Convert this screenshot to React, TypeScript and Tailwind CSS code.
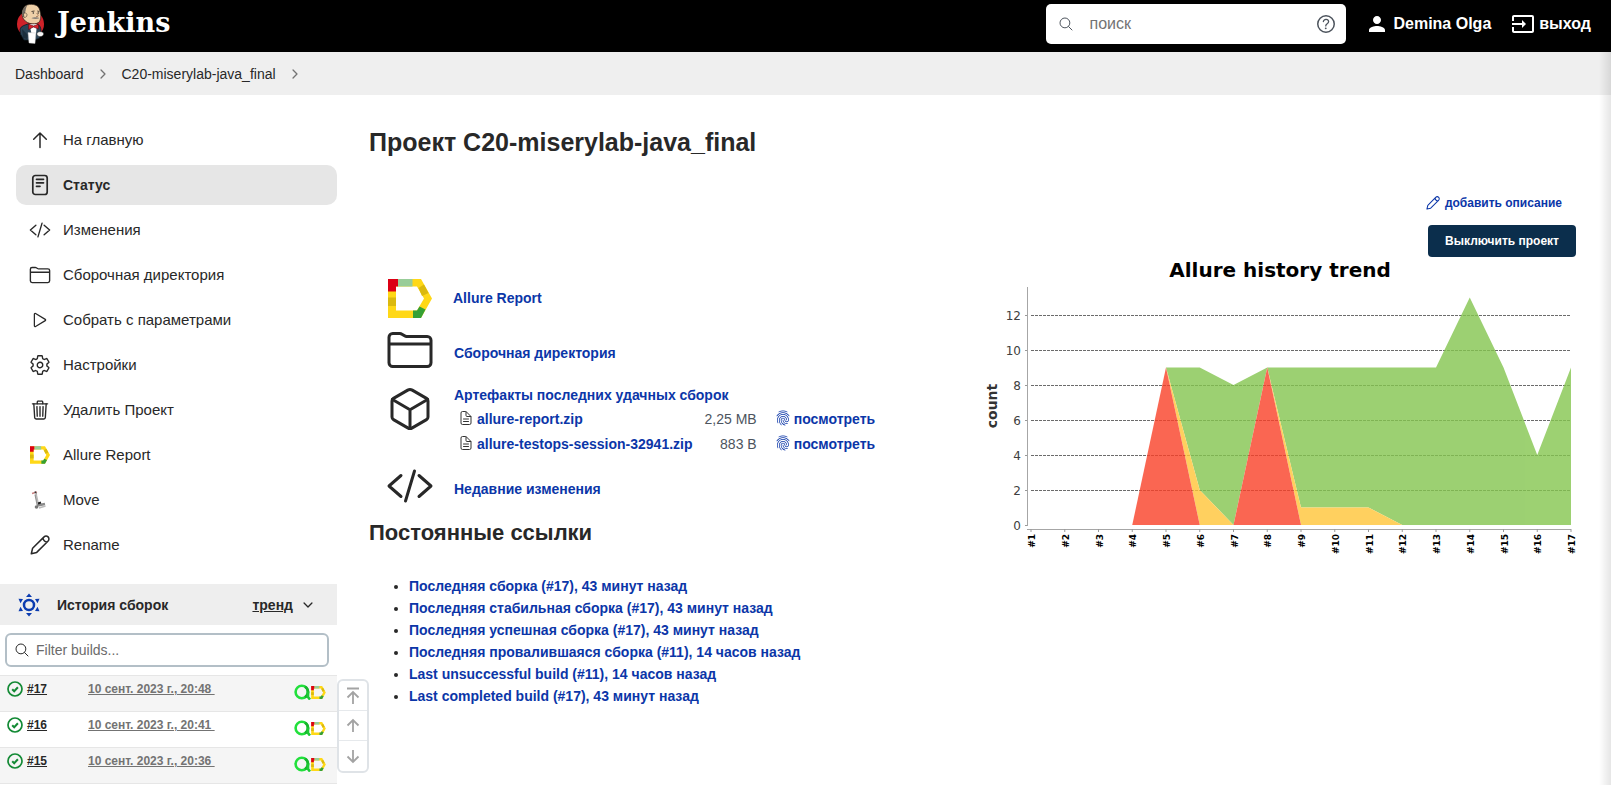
import type { ReactNode } from "react";
import {
  IoChevronForwardOutline,
  IoChevronDownOutline,
  IoCodeSlashOutline,
  IoCubeOutline,
  IoDocumentTextOutline,
  IoFingerPrintOutline,
  IoFolderOutline,
  IoHelpCircleOutline,
  IoPlayOutline,
  IoSearchOutline,
  IoSettingsOutline,
  IoTrashOutline,
} from "react-icons/io5";
import { MdInput, MdPerson } from "react-icons/md";

const link = "font-bold text-[#0b36a8]";

function Mascot() {
  return (
    <svg viewBox="0 0 30 40" className="h-10 w-[30px]" aria-hidden="true">
      <circle cx="15.500" cy="20" r="13.500" fill="#cf2229" />
      <path d="M5 25 C6 22 10 21 13 20 L22 20 C25 21 26 24 26 27 L24.500 34 L20 36 L9 36 L5.500 30 Z" fill="#2b4456" stroke="#0d1a22" strokeWidth="0.800" />
      <path d="M14.500 20 L22 20 L21 30 L16.500 30 Z" fill="#fff" />
      <path d="M7 25 L13 31 L12 35 L8 34 Z" fill="#1c2f3d" />
      <path d="M8.500 15 C6 11 7 4 11 1.500 C15 -0.500 22 0 24 4 C26 9 26.500 14 24.500 17.500 C22 21 12.500 21 8.500 15 Z" fill="#efd0a8" stroke="#2a1f18" strokeWidth="0.700" />
      <path d="M7.500 12 C6 7 8.500 3 12 1.800 C10.500 4.500 11 6.500 10 8.500 L9.500 14 Z" fill="#6f6860" />
      <path d="M8.500 10 C9.500 8 12 9 12 11 C12 13 10 14 8.800 13 Z" fill="#efd0a8" stroke="#2a1f18" strokeWidth="0.500" />
      <path d="M16.500 7.500 L19.500 7 M22.300 7 L24.300 7.500" stroke="#2a1f18" strokeWidth="0.800" />
      <circle cx="18.300" cy="9" r="0.700" fill="#222" />
      <circle cx="23.200" cy="9" r="0.700" fill="#222" />
      <path d="M21.500 9 C23.500 11 24 13 21 12.600" fill="none" stroke="#8b5a3c" strokeWidth="0.700" />
      <path d="M16.500 14.300 C18 13 23 13 24.500 14.300 C22 15.300 19 15.300 16.500 14.300 Z" fill="#8b8279" />
      <path d="M13.500 20 L18.500 22 L23.500 20 L23.500 25 L18.500 23 L13.500 25.500 Z" fill="#d7232d" stroke="#5a0d12" strokeWidth="0.600" />
      <path d="M13 28.500 L21 29 L20 39.500 L14 39 Z" fill="#fff" stroke="#bbb" strokeWidth="0.400" />
      <path d="M22 29 C24 27 27 27.500 28.500 29 C29 31.500 27 33 24 32.500 L22 31 Z" fill="#f4f4f4" stroke="#333" strokeWidth="0.500" />
    </svg>
  );
}

function AllureLogo({ className }: { className: string }) {
  return (
    <svg viewBox="0 0 44 39" className={className} aria-hidden="true">
      <path d="M0 0 H33 L44 19.500 L33 39 H0 Z M8 7.500 V31.500 H29 L36 19.500 L29 7.500 Z" fill="#ffd817" fillRule="evenodd" />
      <path d="M0 0 H10 V7.500 H8 V12.500 H0 Z" fill="#dc0014" />
      <path d="M10 0 H24.500 V7.500 H10 Z" fill="#98cd98" />
      <path d="M0 18.500 H8 V27 H0 Z" fill="#dbb90f" />
      <path d="M30.500 9 L36 5.500 L40.500 14 L34 17 Z" fill="#dbb90f" />
      <path d="M25 31.500 H29 L31.500 27.500 L37.500 30.500 L33 39 H25 Z" fill="#35a035" />
    </svg>
  );
}

function TestOpsLogo() {
  return (
    <svg viewBox="0 0 17 16" className="h-4 w-[17px] shrink-0" aria-hidden="true">
      <circle cx="7.800" cy="8" r="6.200" fill="none" stroke="#22e03c" strokeWidth="2.600" />
      <path d="M11 2.700 A6.200 6.200 0 0 1 11 13.300" fill="none" stroke="#17b52d" strokeWidth="2.600" />
      <path d="M14 7.500 V13 L16 15.500" fill="none" stroke="#1cc935" strokeWidth="2.600" />
    </svg>
  );
}

function ArrowUp({ className }: { className?: string }) {
  return (
    <svg viewBox="0 0 20 20" className={`size-5 ${className ?? ""}`} fill="none" stroke="currentColor" strokeWidth="1.500" strokeLinecap="round" strokeLinejoin="round" aria-hidden="true">
      <path d="M10 17.500 V3 M3.700 9.300 L10 3 L16.300 9.300" />
    </svg>
  );
}

function StatusIcon() {
  return (
    <svg viewBox="0 0 20 22" className="h-[22px] w-5" fill="none" stroke="currentColor" strokeWidth="1.700" strokeLinecap="round" aria-hidden="true">
      <rect x="2.800" y="1.500" width="14.400" height="19" rx="2.500" />
      <path d="M6.500 5.300 H13.500 M6.500 8.800 H13.500 M6.500 12.300 H10" />
    </svg>
  );
}

function Pencil({ className }: { className: string }) {
  return (
    <svg viewBox="0 0 20 20" className={className} fill="none" stroke="currentColor" strokeWidth="1.500" strokeLinejoin="round" aria-hidden="true">
      <path d="M1.300 18.700 L2.600 13.300 L13.800 2.100 C15.200 0.700 17 0.800 18.100 1.900 C19.200 3 19.300 4.800 17.900 6.200 L6.700 17.400 Z M13 3 C13.300 5.500 14.500 6.700 17 7" />
    </svg>
  );
}

function Scooter() {
  return (
    <svg viewBox="0 0 20 20" className="size-5" fill="none" aria-hidden="true">
      <path d="M2 3.500 L7 2" stroke="#c98080" strokeWidth="1.500" />
      <path d="M5 1.500 L6.500 4.500" stroke="#333" strokeWidth="1.500" />
      <path d="M5.500 3 L8 14" stroke="#b8b8b8" strokeWidth="2.200" />
      <path d="M5 5 L7 15" stroke="#666" strokeWidth="0.600" />
      <path d="M7 15.500 L15 14" stroke="#8a8a8a" strokeWidth="2.600" />
      <path d="M8 13.500 L11 12.500" stroke="#222" strokeWidth="2" />
      <circle cx="6.500" cy="17" r="1.800" fill="#777" />
      <path d="M9 18 L15.500 16" stroke="#bbb" strokeWidth="1.500" />
    </svg>
  );
}

function HistoryIcon() {
  return (
    <svg viewBox="0 0 22 24" className="h-6 w-[22px]" fill="#0b3cb0" aria-hidden="true">
      <circle cx="11" cy="12" r="5" fill="none" stroke="#0b3cb0" strokeWidth="2.500" />
      <path d="M11 0.500 L14 4 H8 Z M11 23.500 L14 20 H8 Z M0.500 5.800 L5 6 L2.500 10.300 Z M21.500 5.800 L17 6 L19.500 10.300 Z M0.500 18.200 L5 18 L2.500 13.700 Z M21.500 18.200 L17 18 L19.500 13.700 Z" />
    </svg>
  );
}

function SuccessIcon() {
  return (
    <svg viewBox="0 0 16 16" className="size-4" fill="none" stroke="#138a35" aria-hidden="true">
      <circle cx="8" cy="8" r="7" strokeWidth="1.700" />
      <path d="M5.200 8.200 L7.200 10.200 L10.900 6.200" strokeWidth="2" />
    </svg>
  );
}

const tasks: { label: string; icon: ReactNode; active?: boolean }[] = [
  { label: "На главную", icon: <ArrowUp /> },
  { label: "Статус", icon: <StatusIcon />, active: true },
  { label: "Изменения", icon: <IoCodeSlashOutline className="size-[22px]" /> },
  { label: "Сборочная директория", icon: <IoFolderOutline className="size-[22px]" /> },
  { label: "Собрать с параметрами", icon: <IoPlayOutline className="size-5" /> },
  { label: "Настройки", icon: <IoSettingsOutline className="size-[22px]" /> },
  { label: "Удалить Проект", icon: <IoTrashOutline className="size-[22px]" /> },
  { label: "Allure Report", icon: <AllureLogo className="h-[18px] w-5" /> },
  { label: "Move", icon: <Scooter /> },
  { label: "Rename", icon: <Pencil className="size-5" /> },
];

const builds = [
  { id: "#17", date: "10 сент. 2023 г., 20:48" },
  { id: "#16", date: "10 сент. 2023 г., 20:41" },
  { id: "#15", date: "10 сент. 2023 г., 20:36" },
];

const artifacts = [
  { name: "allure-report.zip", size: "2,25 MB" },
  { name: "allure-testops-session-32941.zip", size: "883 B" },
];

const permalinks = [
  "Последняя сборка (#17), 43 минут назад",
  "Последняя стабильная сборка (#17), 43 минут назад",
  "Последняя успешная сборка (#17), 43 минут назад",
  "Последняя провалившаяся сборка (#11), 14 часов назад",
  "Last unsuccessful build (#11), 14 часов назад",
  "Last completed build (#17), 43 минут назад",
];

function points(values: [number, number][]) {
  return values.map(([build, count]) => `${56 + 33.75 * (build - 1)},${268 - 17.5 * count}`).join(" ");
}

function TrendChart() {
  const buildNumbers = Array.from({ length: 17 }, (_, i) => i + 1);
  return (
    <svg viewBox="0 0 605 300" className="h-[300px] w-[605px]" fontFamily="'DejaVu Sans', sans-serif" role="img" aria-label="Allure history trend">
      <text x="305" y="20" textAnchor="middle" fontSize="20" fontWeight="bold">Allure history trend</text>
      <text x="22" y="149" textAnchor="middle" fontSize="14" fontWeight="bold" fill="#333" transform="rotate(-90 22 149)">count</text>
      {[12, 10, 8, 6, 4, 2, 0].map((v) => (
        <g key={v}>
          <text x="46" y={273 - 17.5 * v} textAnchor="end" fontSize="12" fill="#404040">{v}</text>
          <path d={`M50 ${268.5 - 17.5 * v} H52`} stroke="#999" />
          {v > 0 && <path d={`M56 ${268.5 - 17.5 * v} H595`} stroke="#6b6b6b" strokeDasharray="3 1" />}
        </g>
      ))}
      <g opacity="0.8">
        <polygon fill="#84c54f" points={points([[5, 9], [6, 9], [7, 8], [8, 9], [13, 9], [14, 13], [15, 9], [16, 4], [17, 9], [17, 0], [12, 0], [11, 1], [9, 1], [8, 9], [7, 0], [6, 2]])} />
        <polygon fill="#ffc538" points={points([[5, 9], [6, 2], [7, 0], [6, 0]])} />
        <polygon fill="#ffc538" points={points([[8, 9], [9, 1], [11, 1], [12, 0], [9, 0]])} />
        <polygon fill="#fa4027" points={points([[4, 0], [5, 9], [6, 0]])} />
        <polygon fill="#fa4027" points={points([[7, 0], [8, 9], [9, 0]])} />
      </g>
      <path d="M52.500 30 V269 M52 272.500 H596" stroke="#a6a6a6" fill="none" />
      {buildNumbers.map((n) => {
        const x = 56 + 33.75 * (n - 1);
        return (
          <g key={n}>
            <path d={`M${x} 272 V275`} stroke="#999" />
            <text x={x + 4} y="277" textAnchor="end" fontSize="9" fontWeight="bold" transform={`rotate(-90 ${x + 4} 277)`}>{`#${n}`}</text>
          </g>
        );
      })}
    </svg>
  );
}

export default function App() {
  return (
    <div className="relative min-h-screen overflow-hidden bg-white text-sm text-[#282828] [font-family:'Liberation_Sans',Arial,sans-serif]">
      <header className="flex h-[52px] items-center bg-black pr-5 pl-[15px] text-white">
        <a href="#" className="flex items-center gap-3 pb-1">
          <Mascot />
          <span className="pb-0.5 text-[27px] leading-8 font-bold [font-family:'DejaVu_Serif',serif]">Jenkins</span>
        </a>
        <form className="mr-[19px] mb-1 ml-auto flex h-10 w-[300px] items-center rounded-[5px] bg-white px-3 text-[#4d545d]">
          <IoSearchOutline className="size-4" />
          <input aria-label="поиск" placeholder="поиск" className="min-w-0 flex-1 px-[15px] text-base outline-none placeholder:text-[#737373]" />
          <button type="button" aria-label="Справка" className="-mr-1"><IoHelpCircleOutline className="size-6" /></button>
        </form>
        <a href="#" className="flex items-center gap-1 pb-1 text-base font-bold"><MdPerson className="size-6" />Demina Olga</a>
        <a href="#" className="ml-5 flex items-center gap-1 pb-1 text-base font-bold"><MdInput className="size-6" />выход</a>
      </header>

      <nav aria-label="Навигация" className="flex h-[43px] items-center bg-[#efefef] pl-[15px]">
        <a href="#">Dashboard</a>
        <IoChevronForwardOutline className="mx-3 size-3.5 text-[#737373]" />
        <a href="#">C20-miserylab-java_final</a>
        <IoChevronForwardOutline className="mx-3 size-3.5 text-[#737373]" />
      </nav>

      <div className="flex items-start">
        <aside className="w-[337px] shrink-0 pt-[25px]">
          <nav aria-label="Задачи" className="flex flex-col gap-[5px] pl-4">
            {tasks.map((t) => (
              <a key={t.label} href="#" className={`flex h-10 items-center gap-[11px] rounded-[10px] pl-3 ${t.active ? "bg-[#e6e6e6] font-bold" : "text-[15px]"}`}>
                <span className="flex w-6 justify-center">{t.icon}</span>
                {t.label}
              </a>
            ))}
          </nav>

          <section className="mt-[19px]">
            <div className="flex h-[41px] items-center bg-[#eee] pr-[22px] pl-[18px]">
              <HistoryIcon />
              <h2 className="ml-[17px] font-bold">История сборок</h2>
              <a href="#" className="mr-2 ml-auto font-bold underline">тренд</a>
              <IoChevronDownOutline className="size-3.5" />
            </div>
            <label className="mt-2 mr-2 ml-[5px] flex h-[34px] items-center gap-1.5 rounded-md border-2 border-[#b3bfc7] px-[7px]">
              <IoSearchOutline className="size-4" />
              <input aria-label="Filter builds" placeholder="Filter builds..." className="min-w-0 flex-1 outline-none placeholder:text-[#6b6b6b]" />
            </label>
            <div className="relative mt-2">
              <table className="w-full table-fixed border-b border-[#e6e6e6] text-xs font-bold">
                <tbody>
                  {builds.map((b) => (
                    <tr key={b.id} className="h-9 border-t border-[#e6e6e6] align-top odd:bg-[#f5f5f5]">
                      <td className="w-[88px] pt-[5px] pl-[7px]">
                        <a href="#" className="flex items-center gap-1"><SuccessIcon /><span className="underline">{b.id}</span></a>
                      </td>
                      <td className="pt-[5px]"><a href="#" className="whitespace-pre text-[#737373] underline">{`${b.date} `}</a></td>
                      <td className="w-[50px] pt-2 pr-[11px]">
                        <span className="flex items-center justify-end"><TestOpsLogo /><AllureLogo className="h-[13px] w-[15px]" /></span>
                      </td>
                    </tr>
                  ))}
                </tbody>
              </table>
              <div className="absolute top-1 left-full flex w-8 flex-col divide-y divide-[#e6e9ec] rounded-md border-2 border-[#dfe3e7] bg-white text-[#a3a3a3]">
                <button type="button" aria-label="Новейшие" className="flex h-[30px] items-center justify-center">
                  <svg viewBox="0 0 16 18" className="h-[18px] w-4" fill="none" stroke="currentColor" strokeWidth="1.800" aria-hidden="true"><path d="M2 1.500 H14 M8 17 V5 M2.500 10.500 L8 5 L13.500 10.500" /></svg>
                </button>
                <button type="button" aria-label="Новее" className="flex h-[30px] items-center justify-center">
                  <svg viewBox="0 0 16 18" className="h-[18px] w-4" fill="none" stroke="currentColor" strokeWidth="1.800" aria-hidden="true"><path d="M8 15 V3 M2.500 8.500 L8 3 L13.500 8.500" /></svg>
                </button>
                <button type="button" aria-label="Старее" className="flex h-[30px] items-center justify-center">
                  <svg viewBox="0 0 16 18" className="h-[18px] w-4" fill="none" stroke="currentColor" strokeWidth="1.800" aria-hidden="true"><path d="M8 3 V15 M2.500 9.500 L8 15 L13.500 9.500" /></svg>
                </button>
              </div>
            </div>
          </section>
        </aside>

        <main className="min-w-0 flex-1 pt-8 pr-[31px] pl-8">
          <h1 className="text-[25px] leading-[30px] font-bold">Проект C20-miserylab-java_final</h1>
          <div className="mt-8 flex items-start justify-between">
            <div className="shrink-0">
              <div className="flex flex-col pt-[86px] pl-[17px]">
                <div className="flex h-[46px] items-center gap-[21px]"><AllureLogo className="ml-0.5 h-[39px] w-11" /><a href="#" className={link}>Allure Report</a></div>
                <div className="mt-2 flex h-12 items-center gap-5"><IoFolderOutline className="mb-1.5 size-12" /><a href="#" className={link}>Сборочная директория</a></div>
                <div className="mt-2 flex items-start gap-5">
                  <IoCubeOutline className="size-12" />
                  <div>
                    <a href="#" className={`mb-0.5 block leading-5 ${link}`}>Артефакты последних удачных сборок</a>
                    <table className="ml-1 leading-[25px]">
                      <tbody>
                        {artifacts.map((a) => (
                          <tr key={a.name}>
                            <td><a href="#" className={`flex h-[25px] items-center gap-[3px] ${link}`}><IoDocumentTextOutline className="mb-1 size-4 text-[#333]" />{a.name}</a></td>
                            <td className="pr-[18px] pl-3 text-right text-[#4d545d]">{a.size}</td>
                            <td><a href="#" className={`flex h-[25px] items-center gap-[3px] ${link}`}><IoFingerPrintOutline className="mb-1 size-4" />посмотреть</a></td>
                          </tr>
                        ))}
                      </tbody>
                    </table>
                  </div>
                </div>
                <div className="mt-2 flex h-12 items-center gap-5"><IoCodeSlashOutline className="mb-1.5 size-12" /><a href="#" className={link}>Недавние изменения</a></div>
              </div>
              <h2 className="mt-1.5 text-[22px] leading-7 font-bold">Постоянные ссылки</h2>
              <ul className="mt-7 list-disc pl-10 leading-[22px]">
                {permalinks.map((p) => (
                  <li key={p}><a href="#" className={link}>{p}</a></li>
                ))}
              </ul>
            </div>

            <div className="flex shrink-0 flex-col items-end">
              <a href="#" className={`mr-[18px] flex h-7 items-center gap-[5px] text-xs ${link}`}><Pencil className="size-3.5" />добавить описание</a>
              <button type="button" className="mt-2 mr-1 h-8 rounded bg-[#0b2e4c] px-[17px] text-xs font-bold text-white">Выключить проект</button>
              <TrendChart />
            </div>
          </div>
        </main>
      </div>
      <div className="pointer-events-none absolute top-[52px] right-0 bottom-0 w-3 bg-linear-to-r from-transparent to-black/10" />
    </div>
  );
}
